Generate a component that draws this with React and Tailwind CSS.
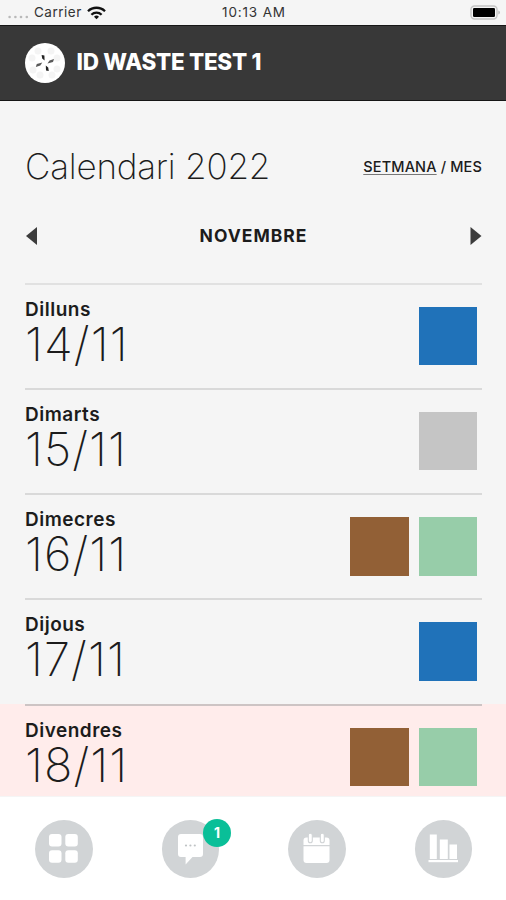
const days = [
  { name: 'Dilluns', date: '14/11', bins: ['bg-[#2072b9]'] },
  { name: 'Dimarts', date: '15/11', bins: ['bg-[#c5c5c5]'] },
  { name: 'Dimecres', date: '16/11', bins: ['bg-[#926036]', 'bg-[#97cda9]'] },
  { name: 'Dijous', date: '17/11', bins: ['bg-[#2072b9]'] },
  { name: 'Divendres', date: '18/11', bins: ['bg-[#926036]', 'bg-[#97cda9]'], today: true },
];

const StatusBar = () => (
  <div className="h-[25px] shrink-0 grid grid-cols-3 items-center leading-none text-[#333]">
    <div className="flex items-center pl-2">
      <svg width="22" height="6" viewBox="0 0 22 6" fill="#b9b9b9" className="mt-2">
        <circle cx="1.6" cy="3" r="1.3" />
        <circle cx="7.4" cy="3" r="1.3" />
        <circle cx="13" cy="3" r="1.3" />
        <circle cx="18.8" cy="3" r="1.3" />
      </svg>
      <span className="ml-1 text-[13.5px] tracking-[0.5px]">Carrier</span>
      <svg width="19" height="14" viewBox="0 0 19 14" fill="none" stroke="#111" strokeWidth="2.3" className="ml-[5px]">
        <path d="M1 5.2a12.2 12.2 0 0 1 17 0" />
        <path d="M4.4 8.7a7.3 7.3 0 0 1 10.2 0" />
        <path d="M9.5 13.2 7 10.7a3.6 3.6 0 0 1 5 0z" fill="#111" stroke="none" />
      </svg>
    </div>
    <span className="text-center text-[13.5px] tracking-[0.85px] pl-[2px]">10:13 AM</span>
    <svg width="31" height="15" viewBox="0 0 31 15" className="justify-self-end mr-[5px]">
      <rect x="1" y="1" width="26" height="13" rx="3.5" fill="#f5f5f5" stroke="#c4c4c4" strokeWidth="1.4" />
      <rect x="3" y="3" width="22" height="9" rx="1.2" fill="#000" />
      <path d="M28.3 5.5v4q1.7-.5 1.7-2t-1.7-2z" fill="#bbb" />
    </svg>
  </div>
);

const Logo = () => (
  <svg width="40" height="40" viewBox="0 0 40 40">
    <circle cx="20" cy="20" r="20" fill="#fff" />
    <g fill="#f4f4f4">
      <circle cx="13" cy="8" r="3.5" />
      <circle cx="26" cy="8" r="3.5" />
      <circle cx="7" cy="15" r="3.5" />
      <circle cx="32" cy="15" r="3.5" />
      <circle cx="8" cy="27" r="3.5" />
      <circle cx="32" cy="26" r="3.5" />
      <circle cx="15" cy="32" r="3.5" />
      <circle cx="27" cy="32" r="3.5" />
    </g>
    <g fill="#222">
      <path d="M16.6 12 19.4 12.6l.2 5-2.4-2.2z" />
      <path d="M29 16 28 19l-5.5 1.6 2-3z" opacity=".75" />
      <path d="M10.8 24 11.8 21l5.5-1.6-2 3z" opacity=".75" />
      <path d="M23.8 28 21 27.4l-.2-5 2.4 2.2z" />
    </g>
  </svg>
);

const Day = ({ name, date, bins, today, first }) => (
  <li className={today ? 'pl-[25px] pr-6 h-[92px] bg-[#ffeceb] overflow-hidden' : 'pl-[25px] pr-6 h-[105.25px]'}>
    <div className={`flex justify-between border-t-2 pr-[5px] h-full ${first ? 'border-[#e1e1e1]' : today ? 'border-[#cdc4c4]' : 'border-[#d9d9d9]'}`}>
      <div className="pt-[13px]">
        <div className="text-[19px] leading-[23px] font-semibold tracking-[0.5px]">{name}</div>
        <div className="text-[47px] leading-[46px] font-extralight tracking-[1.1px]">{date}</div>
      </div>
      <div className="flex gap-[10px] pt-[22px]">
        {bins.map((color, i) => (
          <div key={i} className={`size-[58.5px] ${color}`} />
        ))}
      </div>
    </div>
  </li>
);

const NavButton = ({ children, badge }) => (
  <button className="relative size-[57.5px] rounded-full bg-[#d1d4d6]">
    <svg width="57" height="57" viewBox="0 0 57 57" fill="#fff">
      {children}
    </svg>
    {badge && (
      <span className="absolute left-[41.5px] -top-[1.5px] size-[28px] rounded-full bg-[#0abf98] text-white text-[14px] leading-[28px] font-bold text-center">
        {badge}
      </span>
    )}
  </button>
);

const BottomNav = () => (
  <nav className="h-[103.5px] shrink-0 bg-white flex justify-between pl-[35px] pr-[34px] pt-[23.5px]">
    <NavButton>
      <rect x="14" y="14" width="12.5" height="12.5" rx="3" />
      <rect x="30.3" y="14" width="12.5" height="12.5" rx="3" />
      <rect x="14" y="30.3" width="12.5" height="12.5" rx="3" />
      <rect x="30.3" y="30.3" width="12.5" height="12.5" rx="3" />
    </NavButton>
    <NavButton badge="1">
      <path d="M19 14h19a3 3 0 0 1 3 3v17a3 3 0 0 1-3 3h-7.5L23.6 44.5V37H19a3 3 0 0 1-3-3V17a3 3 0 0 1 3-3z" />
      <g fill="#bfc3c5">
        <circle cx="24" cy="25.5" r="1.1" />
        <circle cx="28.4" cy="25.5" r="1.1" />
        <circle cx="32.8" cy="25.5" r="1.1" />
      </g>
    </NavButton>
    <NavButton>
      <path d="M18.5 17.5h20a3 3 0 0 1 3 3V25h-26v-4.5a3 3 0 0 1 3-3z" />
      <path d="M15.5 26.3h26V40a3 3 0 0 1-3 3h-20a3 3 0 0 1-3-3z" />
      <g stroke="#d1d4d6" strokeWidth="1.1">
        <rect x="20.3" y="13.3" width="4" height="9.5" rx="2" />
        <rect x="32.3" y="13.3" width="4" height="9.5" rx="2" />
      </g>
    </NavButton>
    <NavButton>
      <rect x="14.8" y="14.5" width="7" height="24.5" />
      <rect x="24.8" y="19.5" width="8" height="19.5" />
      <rect x="34.5" y="24.5" width="7.5" height="14.5" />
      <rect x="13.5" y="40" width="29.5" height="2.2" />
    </NavButton>
  </nav>
);

export default function App() {
  return (
    <div className="h-[900px] w-[506px] flex flex-col overflow-hidden bg-[#f5f5f5] text-[#1c1c1c] font-['Inter',sans-serif]">
      <StatusBar />

      <header className="h-[75.5px] shrink-0 flex items-center gap-3 pl-[24.5px] bg-[#383838] border-y border-[#161616]">
        <Logo />
        <h1 className="text-white text-[22.5px] leading-none font-extrabold tracking-[-0.3px] pb-px">ID WASTE TEST 1</h1>
      </header>

      <main className="flex-1 min-h-0 flex flex-col">
        <div className="flex items-center justify-between pl-[25px] pr-6 mt-[43px] h-[46px]">
          <h2 className="text-[35px] leading-none font-extralight tracking-[-0.2px]">Calendari 2022</h2>
          <p className="text-[14.5px] leading-none font-medium tracking-[0.15px] pt-[2px]">
            <span className="underline decoration-1 decoration-[#777] underline-offset-2">SETMANA</span> / MES
          </p>
        </div>

        <div className="flex items-center justify-between pl-[25px] pr-6 mt-[34.5px] h-[24px]">
          <svg width="13" height="20" viewBox="0 0 13 20" fill="#3c3c3c"><path d="M1 10 12 1v18z" /></svg>
          <span className="text-[17.5px] leading-none font-bold tracking-[1px]">NOVEMBRE</span>
          <svg width="13" height="20" viewBox="0 0 13 20" fill="#3c3c3c"><path d="M12.5 10 1.5 1v18z" /></svg>
        </div>

        <ul className="mt-[34.5px]">
          {days.map((day, i) => (
            <Day key={day.date} first={i === 0} {...day} />
          ))}
        </ul>
      </main>

      <BottomNav />
    </div>
  );
}
